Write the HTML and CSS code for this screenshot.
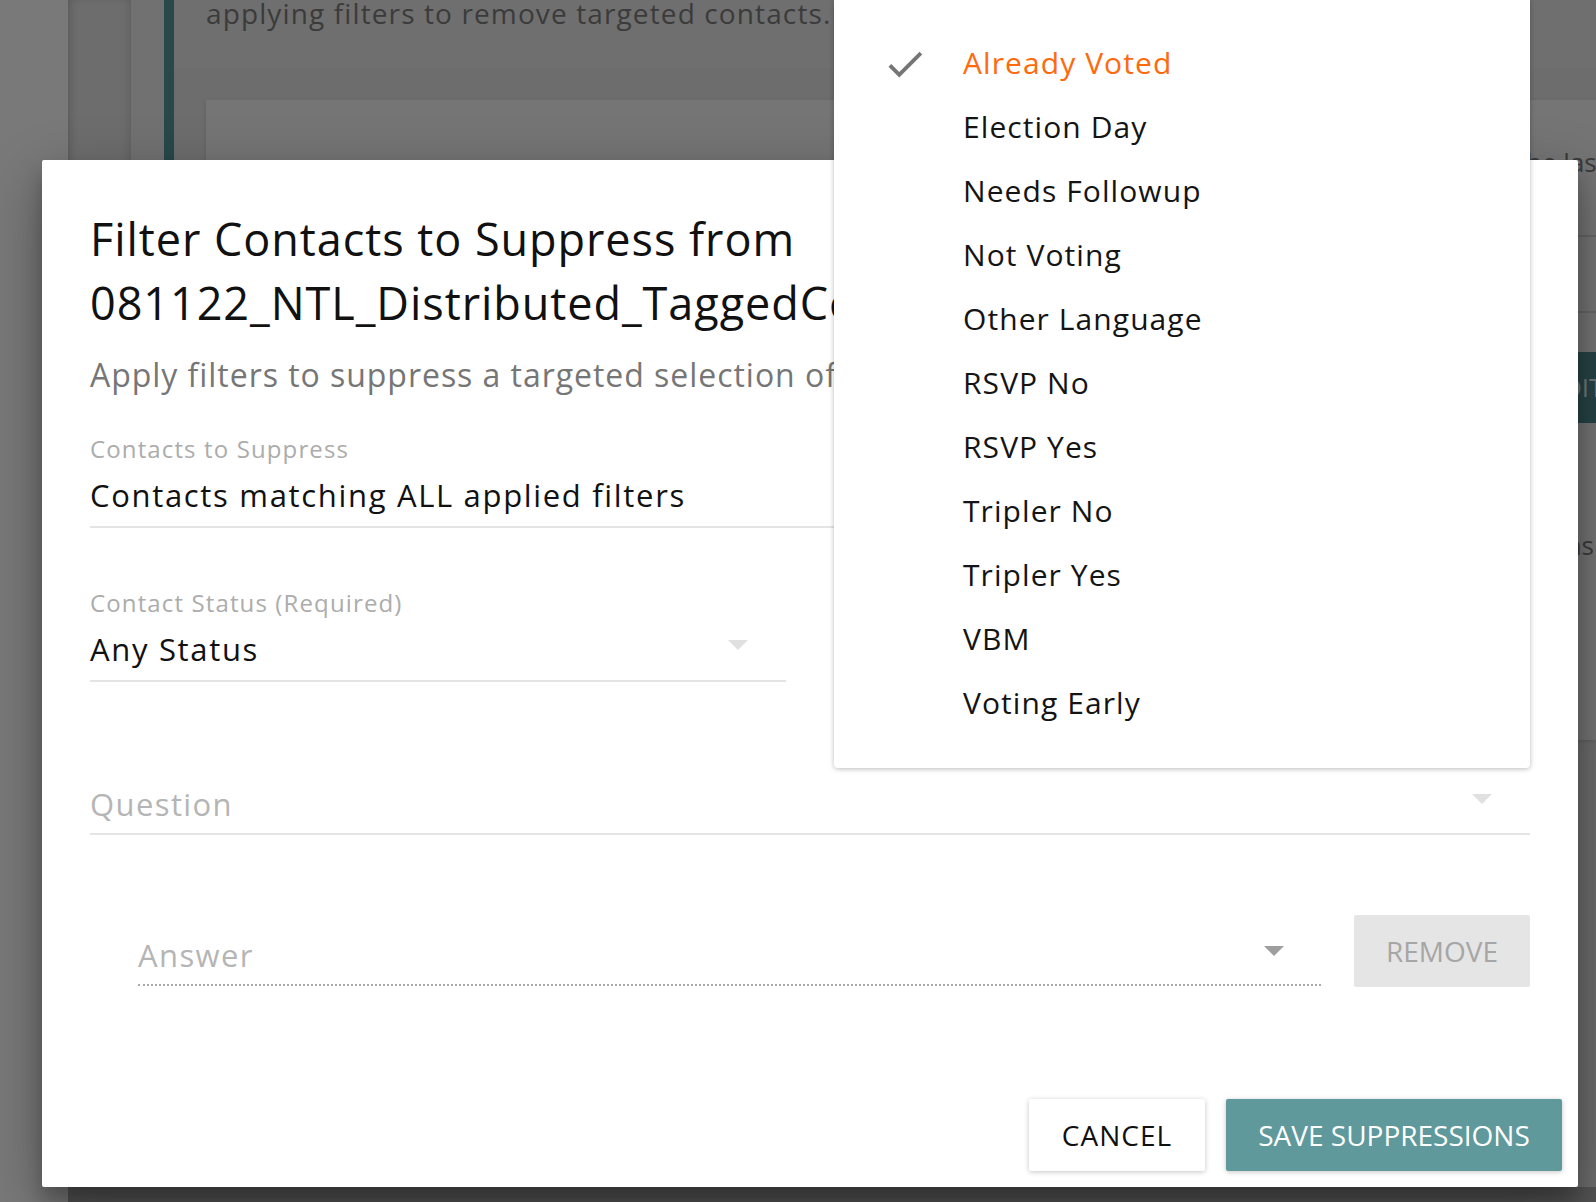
FILE: index.html
```html
<!DOCTYPE html>
<html lang="en">
<head>
<meta charset="utf-8">
<title>Filter Contacts to Suppress</title>
<link rel="stylesheet" href="styles.css">
</head>
<body>
<div class="page">
  <div class="page-top">
    <div class="rail rail-a"></div>
    <div class="rail rail-b"></div>
    <div class="rail rail-c"></div>
    <main class="main">
      <div class="main-head"><p class="head-text">applying filters to remove targeted contacts.</p></div>
      <div class="main-body">
        <div class="card">
          <div class="card-row first"><span class="card-text">Contacts with the last</span></div>
          <div class="card-row second"></div>
          <div class="card-action"><span class="card-btn">EDIT</span></div>
          <div class="card-row last"><span class="card-text">Suppressions</span></div>
        </div>
      </div>
    </main>
  </div>
  <div class="page-bottom">
    <div class="rail rail-a"></div>
    <div class="bottom-bar"></div>
  </div>
</div>

<section class="dialog">
  <h1 class="dialog-title">Filter Contacts to Suppress from<br>081122_NTL_Distributed_TaggedContacts</h1>
  <p class="dialog-sub">Apply filters to suppress a targeted selection of contacts from this list.</p>

  <div class="field field-suppress">
    <div class="field-label">Contacts to Suppress</div>
    <div class="field-value">Contacts matching ALL applied filters</div>
  </div>

  <div class="field field-status">
    <div class="field-label">Contact Status (Required)</div>
    <div class="field-value">Any Status</div>
    <span class="arrow"></span>
  </div>

  <div class="field field-question">
    <div class="field-value placeholder">Question</div>
    <span class="arrow"></span>
  </div>

  <div class="answer-row">
    <div class="field field-answer">
      <div class="field-value placeholder">Answer</div>
      <span class="arrow arrow-dark"></span>
    </div>
    <button class="btn btn-remove" type="button">REMOVE</button>
  </div>

  <div class="dialog-actions">
    <button class="btn btn-cancel" type="button">CANCEL</button>
    <button class="btn btn-save" type="button">SAVE SUPPRESSIONS</button>
  </div>
</section>

<ul class="menu">
  <li class="menu-item selected">
    <svg class="check" viewBox="0 0 24 24" width="46" height="46"><path d="M9 16.17L4.83 12l-1.42 1.41L9 19 21 7l-1.41-1.41z" fill="#757575"/></svg>
    Already Voted
  </li>
  <li class="menu-item">Election Day</li>
  <li class="menu-item">Needs Followup</li>
  <li class="menu-item">Not Voting</li>
  <li class="menu-item">Other Language</li>
  <li class="menu-item">RSVP No</li>
  <li class="menu-item">RSVP Yes</li>
  <li class="menu-item">Tripler No</li>
  <li class="menu-item">Tripler Yes</li>
  <li class="menu-item">VBM</li>
  <li class="menu-item">Voting Early</li>
</ul>
</body>
</html>
```

FILE: styles.css
```css
* { box-sizing: border-box; }
html, body {
  margin: 0;
  padding: 0;
  width: 1596px;
  height: 1202px;
  overflow: hidden;
  font-family: "Open Sans", "Noto Sans", "DejaVu Sans", sans-serif;
  background: #6c6c6c;
}

/* background page (already dimmed by the dialog backdrop) */
.page {
  display: flex;
  flex-direction: column;
  height: 1202px;
}
.page-top {
  display: flex;
  height: 1187px;
  flex: none;
}
.page-bottom {
  display: flex;
  flex: 1;
}
.bottom-bar { flex: 1; background: #545454; }
.rail { flex: none; height: 100%; }
.rail-a { width: 68px; background: #797979; }
.rail-b { width: 63px; background: #6d6d6d; box-shadow: inset 6px 0 8px -4px rgba(0,0,0,0.18), inset -6px 0 8px -4px rgba(0,0,0,0.12); }
.rail-c { width: 33px; background: #717171; }
.main {
  flex: 1;
  border-left: 10px solid #284849;
  display: flex;
  flex-direction: column;
  background: #6d6d6d;
  overflow: hidden;
}
.main-head {
  height: 68px;
  flex: none;
  background: #6f6f6f;
  padding-left: 32px;
  overflow: hidden;
}
.head-text {
  margin: -7px 0 0;
  font-size: 28px;
  line-height: 40px;
  letter-spacing: 0.04em;
  color: #3b3b3b;
  white-space: nowrap;
}
.main-body {
  flex: 1;
  padding: 32px 0 0 32px;
}
.card {
  background: #757575;
  height: 640px;
  box-shadow: 0 1px 4px rgba(0,0,0,0.15);
  display: flex;
  flex-direction: column;
}
.card-row {
  border-bottom: 2px solid #666;
  display: flex;
  justify-content: flex-end;
  flex: none;
}
.card-row.first { height: 137px; padding-top: 44px; }
.card-row.second { height: 76px; }
.card-row.last { border-bottom: 0; height: 160px; padding-top: 104px; }
.card-text {
  font-size: 26px;
  line-height: 36px;
  color: #3b3b3b;
  margin-right: -10px;
  white-space: nowrap;
}
.card-row.last .card-text { margin-right: 2px; }
.card-action {
  display: flex;
  justify-content: flex-end;
  padding-top: 39px;
  flex: none;
}
.card-btn {
  width: 100px;
  height: 71px;
  background: #274446;
  color: #707a7a;
  font-size: 26px;
  line-height: 71px;
  text-align: center;
  margin-right: -30px;
}

/* dialog */
.dialog {
  position: absolute;
  left: 42px;
  top: 160px;
  width: 1536px;
  height: 1027px;
  background: #fff;
  border-radius: 2px;
  box-shadow: 0 19px 60px rgba(0,0,0,0.3), 0 15px 20px rgba(0,0,0,0.22);
  padding: 47px 48px 16px 48px;
  display: flex;
  flex-direction: column;
  overflow: hidden;
}
.dialog-title {
  margin: 0;
  font-size: 45px;
  line-height: 64px;
  font-weight: 400;
  letter-spacing: 0.021em;
  color: #111;
  white-space: nowrap;
}
.dialog-sub {
  margin: 20px 0 0;
  font-size: 32px;
  line-height: 40px;
  letter-spacing: 0.03em;
  color: #767676;
  white-space: nowrap;
}

.field {
  position: relative;
  border-bottom: 2px solid #e4e4e4;
  padding-bottom: 11px;
  flex: none;
}
.field-label {
  font-size: 24px;
  line-height: 32px;
  letter-spacing: 0.047em;
  color: #acacac;
  white-space: nowrap;
}
.field-value {
  margin-top: 10px;
  font-size: 31px;
  line-height: 40px;
  letter-spacing: 0.054em;
  color: #111;
  white-space: nowrap;
}
.field-value.placeholder { color: #b5b5b5; margin-top: 0; letter-spacing: 0.045em; }
.field-suppress { margin-top: 38px; }
.field-status { margin-top: 59px; width: 696px; }
.field-question { margin-top: 102px; padding-bottom: 9px; }

.arrow {
  position: absolute;
  right: 38px;
  width: 0;
  height: 0;
  border-left: 10px solid transparent;
  border-right: 10px solid transparent;
  border-top: 10px solid #e0e0e0;
}
.field-status .arrow { top: 53px; }
.field-question .arrow { top: 10px; }
.arrow-dark { border-top-color: #9e9e9e; }

.answer-row {
  display: flex;
  align-items: flex-end;
  gap: 33px;
  margin-top: 80px;
  padding-left: 48px;
  flex: none;
}
.field-answer {
  width: 1183px;
  flex: none;
  border-bottom: 2px dotted #a9a9a9;
  padding-bottom: 9px;
}
.field-answer .arrow { top: 11px; right: 37px; }

.btn {
  font-family: inherit;
  border: 0;
  margin: 0;
  height: 72px;
  font-size: 28px;
  line-height: 72px;
  border-radius: 2px;
  padding: 0;
  cursor: pointer;
  flex: none;
}
.btn-remove {
  width: 176px;
  background: #e5e5e5;
  color: #a6a6a6;
  margin-bottom: -1px;
}

.dialog-actions {
  margin-top: auto;
  margin-right: -32px;
  display: flex;
  justify-content: flex-end;
  gap: 21px;
  flex: none;
}
.btn-cancel {
  width: 176px;
  background: #fff;
  color: #111;
  letter-spacing: 0.036em;
  box-shadow: 0 1px 6px rgba(0,0,0,0.12), 0 1px 4px rgba(0,0,0,0.12);
}
.btn-save {
  width: 336px;
  background: #5f999c;
  color: #fff;
  box-shadow: 0 1px 6px rgba(0,0,0,0.12), 0 1px 4px rgba(0,0,0,0.12);
}

/* dropdown menu */
.menu {
  position: absolute;
  left: 834px;
  top: 0;
  width: 696px;
  margin: 0;
  padding: 31px 0 33px;
  list-style: none;
  background: #fff;
  border-radius: 0 0 4px 4px;
  box-shadow: 0 1px 6px rgba(0,0,0,0.14), 0 1px 4px rgba(0,0,0,0.14);
}
.menu-item {
  position: relative;
  height: 64px;
  line-height: 64px;
  padding-left: 129px;
  font-size: 30px;
  letter-spacing: 0.036em;
  color: #141414;
  white-space: nowrap;
}
.menu-item.selected { color: #ff6a0d; }
.check {
  position: absolute;
  left: 48px;
  top: 10px;
}
```
